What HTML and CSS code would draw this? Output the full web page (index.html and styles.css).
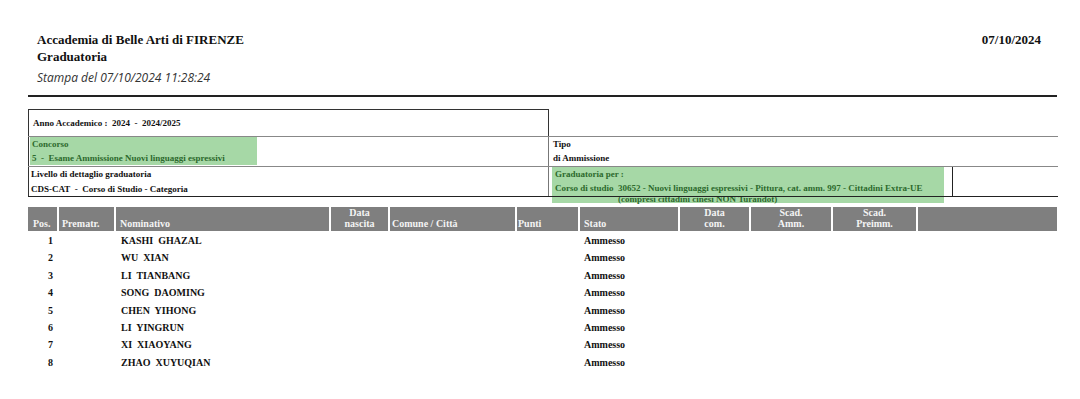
FILE: index.html
```html
<!DOCTYPE html>
<html lang="it">
<head>
<meta charset="utf-8">
<title>Graduatoria</title>
<link rel="stylesheet" href="styles.css">
</head>
<body>
<div class="page">
  <header class="top">
    <div class="heading">
      <div class="title">Accademia di Belle Arti di FIRENZE</div>
      <div class="title">Graduatoria</div>
      <div class="print">Stampa del 07/10/2024 11:28:24</div>
    </div>
    <div class="date">07/10/2024</div>
  </header>
  <div class="rule"></div>

  <table class="info">
    <colgroup><col class="c1"><col class="c2"><col class="c3"></colgroup>
    <tr class="r1">
      <td class="box">Anno Accademico :&nbsp;&nbsp;<span class="val">2024&nbsp;&nbsp;-&nbsp;&nbsp;2024/2025</span></td>
      <td colspan="2" class="blank"></td>
    </tr>
    <tr class="r2">
      <td class="left"><div class="green conc"><div>Concorso</div><div>5&nbsp;&nbsp;-&nbsp;&nbsp;Esame Ammissione Nuovi linguaggi espressivi</div></div></td>
      <td colspan="2" class="mid"><div class="pad"><div>Tipo</div><div>di Ammissione</div></div></td>
    </tr>
    <tr class="r3">
      <td class="left"><div class="lvl"><div>Livello di dettaglio graduatoria</div><div>CDS-CAT&nbsp;&nbsp;-&nbsp;&nbsp;Corso di Studio - Categoria</div></div></td>
      <td class="mid"><div class="green grad"><div>Graduatoria per :</div><div>Corso di studio&nbsp;&nbsp;30652 - Nuovi linguaggi espressivi - Pittura, cat. amm. 997 - Cittadini Extra-UE</div><div class="more">(compresi cittadini cinesi NON Turandot)</div></div></td>
      <td class="end"></td>
    </tr>
  </table>

  <table class="list">
    <colgroup>
      <col style="width:30px"><col style="width:57px"><col style="width:215px"><col style="width:59px">
      <col style="width:127px"><col style="width:63px"><col style="width:100px"><col style="width:71px">
      <col style="width:82px"><col style="width:85px"><col style="width:140px">
    </colgroup>
    <thead>
      <tr>
        <th class="first">Pos.</th>
        <th>Prematr.</th>
        <th class="nom">Nominativo</th>
        <th class="ctr">Data<br>nascita</th>
        <th class="com">Comune / Città</th>
        <th class="pun">Punti</th>
        <th class="sta">Stato</th>
        <th class="ctr">Data<br>com.</th>
        <th class="ctr">Scad.<br>Amm.</th>
        <th class="ctr">Scad.<br>Preimm.</th>
        <th></th>
      </tr>
    </thead>
    <tbody>
      <tr><td class="pos">1</td><td></td><td class="name">KASHI  GHAZAL</td><td></td><td></td><td></td><td class="st">Ammesso</td><td></td><td></td><td></td><td></td></tr>
      <tr><td class="pos">2</td><td></td><td class="name">WU  XIAN</td><td></td><td></td><td></td><td class="st">Ammesso</td><td></td><td></td><td></td><td></td></tr>
      <tr><td class="pos">3</td><td></td><td class="name">LI  TIANBANG</td><td></td><td></td><td></td><td class="st">Ammesso</td><td></td><td></td><td></td><td></td></tr>
      <tr><td class="pos">4</td><td></td><td class="name">SONG  DAOMING</td><td></td><td></td><td></td><td class="st">Ammesso</td><td></td><td></td><td></td><td></td></tr>
      <tr><td class="pos">5</td><td></td><td class="name">CHEN  YIHONG</td><td></td><td></td><td></td><td class="st">Ammesso</td><td></td><td></td><td></td><td></td></tr>
      <tr><td class="pos">6</td><td></td><td class="name">LI  YINGRUN</td><td></td><td></td><td></td><td class="st">Ammesso</td><td></td><td></td><td></td><td></td></tr>
      <tr><td class="pos">7</td><td></td><td class="name">XI  XIAOYANG</td><td></td><td></td><td></td><td class="st">Ammesso</td><td></td><td></td><td></td><td></td></tr>
      <tr><td class="pos">8</td><td></td><td class="name">ZHAO  XUYUQIAN</td><td></td><td></td><td></td><td class="st">Ammesso</td><td></td><td></td><td></td><td></td></tr>
    </tbody>
  </table>
</div>
</body>
</html>
```
FILE: styles.css
```css
html {
  background: #fff;
}
html, body {
  margin: 0;
  padding: 0;
}
body {
  font-family: "Liberation Serif", "Times New Roman", serif;
  color: #111;
}
.page {
  width: 1029px;
  padding: 31px 0 0 28px;
}
.top {
  display: flex;
  justify-content: space-between;
  padding: 0 16px 0 9px;
}
.title, .date {
  font: bold 13px/17px "Liberation Serif", serif;
  color: #111;
}
.print {
  font: italic 12px/20px "Open Sans", "DejaVu Sans", sans-serif;
  color: #333;
  margin-top: 3px;
}
.rule {
  margin-top: 7px;
  border-top: 2px solid #222;
}

/* info table */
.info {
  margin-top: 12px;
  width: 1029px;
  border-collapse: collapse;
  table-layout: fixed;
  font: bold 9px/14px "Liberation Serif", serif;
  color: #111;
}
.info col.c1 { width: 520px; }
.info col.c2 { width: 404px; }
.info col.c3 { width: 105px; }
.info td {
  padding: 0;
  vertical-align: top;
}
.info .r1 td { height: 26px; border-bottom: 1px solid #888; }
.info .r1 td.box {
  border: 1px solid #333;
  border-bottom-color: #888;
  vertical-align: middle;
  padding-left: 4px;
}
.info .val { font-size: 9px; }
.info .r2 td { height: 29px; border-bottom: 1px solid #888; }
.info .r3 td { height: 28px; border-bottom: 1px solid #222; }
.info td.left { border-left: 1px solid #333; }
.info td.mid { border-left: 1px solid #777; }
.info td.end { border-left: 1px solid #222; }
.green {
  position: relative;
  z-index: -1;
  background: #a6d8a6;
  color: #2d6a2d;
}
.conc {
  width: 225px;
  margin-left: 1px;
  padding-left: 2px;
  height: 28px;
}
.pad {
  padding: 0 0 0 4px;
}
.lvl {
  padding: 0 0 0 2px;
  line-height: 14.5px;
}
.grad {
  width: 392px;
  height: 36px;
  margin-left: 3px;
  margin-bottom: -8px;
  padding-left: 3px;
  box-sizing: border-box;
}
.grad .more {
  line-height: 8px;
  padding-left: 63px;
}

/* list table */
.list {
  margin-top: 10px;
  width: 1029px;
  border-collapse: collapse;
  table-layout: fixed;
  font: bold 10px "Liberation Serif", serif;
}
.list th {
  background: #7f7f7f;
  color: #f4f4f4;
  height: 22px;
  padding: 0 0 2px 3px;
  line-height: 11px;
  text-align: left;
  vertical-align: bottom;
  border-left: 2px solid #fff;
  border-bottom: 1px solid #fff;
  font-weight: bold;
}
.list th.first { border-left: 0; padding-left: 5px; }
.list th.nom { padding-left: 4px; }
.list th.com { padding-left: 2px; }
.list th.pun { padding-left: 1px; }
.list th.sta { padding-left: 4px; }
.list th.ctr { text-align: center; padding-left: 0; }
.list td {
  padding: 0;
  height: 17.4px;
  line-height: 17.4px;
  color: #111;
  white-space: pre;
}
.list td.pos { text-align: right; padding-right: 5px; }
.list td.name { padding-left: 6px; }
.list td.st { padding-left: 5px; }
```
